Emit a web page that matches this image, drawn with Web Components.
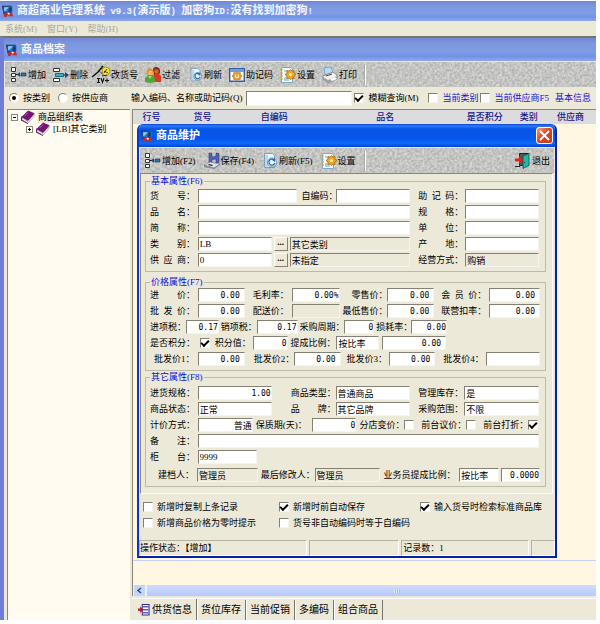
<!DOCTYPE html>
<html lang="zh-CN">
<head>
<meta charset="utf-8">
<title>商超商业管理系统</title>
<style>
html{height:100%}
body{margin:0;min-height:100%;display:flex;flex-direction:column;background:#fff;color:#000;font:9px/12px "Liberation Serif","Noto Sans CJK SC",serif}
</style>
</head>
<body>
<shop-app></shop-app>
<script>
const base = `*{box-sizing:border-box}input,button,select{font:inherit;color:inherit;margin:0;border-radius:0}`;
function define(name, css, html, setup){
  const t = document.createElement('template');
  t.innerHTML = `<style>${base}${css}</style>${html}`;
  customElements.define(name, class extends HTMLElement{
    constructor(){ super(); this.attachShadow({mode:'open'}).append(t.content.cloneNode(true)); }
    connectedCallback(){ if(setup) setup(this, this.shadowRoot); }
  });
}

const icons = {
app:`<path fill="#1b2440" d="M0 1h13v11H2z"/><path fill="#2f78c8" d="M2 2h12v8H2z"/><path fill="#8fd0f4" d="M3 3h6L4 8H3z"/><path fill="#173a74" d="M10 3h3v6H8z"/><path fill="#c02c2c" d="M2 12l3-2h3l2 1 3-1 2 5H9l-1-2-2 3H3z"/><path fill="#fff" d="M7 11l2-1 2 2-2 1z"/>`,
add:`<path fill="#fff" stroke="#333" d="M.5 .5h4v4h-4zM.5 6.500h4v3h-4zM.5 11.500h4v3h-4z"/><path stroke="#111" d="M5 7.500h4"/><path fill="#2b7ba8" stroke="#124" stroke-width=".6" d="M10 6h5v3h-5z"/><path fill="#124a9c" d="M6 7.500l3-2.500v5z"/>`,
del:`<path fill="#fff" stroke="#333" d="M.5 1.500h6v3h-6zM.5 11.500h6v3h-6z"/><path fill="#35b6bd" stroke="#176c80" d="M2.500 6.500h8v3h-8z"/><path stroke="#111" d="M11 8h3"/><path fill="#124a9c" d="M12 5l4 3-4 3z"/>`,
edit:`<path stroke="#111" stroke-width="1.500" d="M-2 10l6-5 5-6"/><path stroke="#444" d="M4 3l7 6M7-1l5 8"/><path fill="#ffe42e" stroke="#776600" stroke-width=".6" d="M8 2l3-2 4 1 1 4-3 4-4-1z"/><path stroke="#111" stroke-width=".8" d="M10 4l4 2m-1-4l-3 4M8 9l5-1"/><path stroke="#111" stroke-width="1.100" d="M3 11.500h3M4.500 11.500v4M3 15.500h3M7 11l1.500 4.500L10 11M11 13.500h4M13 11.500v4"/>`,
users:`<path fill="#7e2d18" d="M8 3q0-3 3-3t4 3v3l-2 2H9z"/><circle cx="11.500" cy="4.500" r="2.300" fill="#c66a34"/><path fill="#dd3722" d="M8 15V9l2-2h4l2 2v6z"/><circle cx="5" cy="5" r="3.500" fill="#e8902a"/><circle cx="5.500" cy="6" r="2.200" fill="#f7bd74"/><path fill="#54a33b" d="M0 15v-4l3-3h5l2 3v4l-5 1z"/><path fill="#a9d676" d="M3 9l2 3 2-3z"/>`,
refresh:`<path fill="#eaf3fb" stroke="#7e9fbd" d="M2.500.5h8l2 2v12h-10z"/><path fill="#b9d7ee" d="M3 2h3v12H3z"/><circle cx="10" cy="9.500" r="4.500" fill="#e8f7ff" stroke="#5d93bd"/><path stroke="#356d9e" stroke-width="1.300" d="M12 7a3 3 0 1 0 .8 3"/><path fill="#356d9e" d="M13 5v4l-3-2z"/>`,
code:`<path fill="#fff" stroke="#365e9c" stroke-width="1.400" d="M.7 1.700h14.600v12.600H.7z"/><path fill="#6b9fe2" d="M1 2h14v3H1z"/><path fill="#f2a022" stroke="#a86510" stroke-width=".6" d="M8 4.500l1.300 1.300 2-.2v2L13 9l-1.700 1.400v2H9L8 13.500 7 12.400H4.700v-2L3 9l1.700-1.400v-2l2 .2z"/><circle cx="8" cy="9" r="2" fill="#fff"/><path stroke="#a05400" d="M8 7v3"/>`,
gear:`<path fill="#f5fafc" stroke="#83a8bc" d="M1.500.5h10l1 2v13h-11z"/><path stroke="#70a5bc" d="M4 4h3M4 11h3M4 13h5"/><path stroke="#c9a742" d="M0 3h3M0 6h3M0 9h3M0 12h3"/><path fill="#f0a426" stroke="#9d5b0c" stroke-width=".7" d="M10.500 2.500L12 4l2-.4V6l2 1.500L14 9v2.500l-2-.3-1.500 1.500L9 11.200l-2 .3V9L5 7.500 7 6V3.600L9 4z"/><circle cx="10.500" cy="7.500" r="1.500" fill="#fff0ba"/>`,
print:`<path fill="#b9daf4" stroke="#6c94b9" stroke-width=".7" d="M3 8L2 1l7-1 2 6z"/><path fill="#f2f2ec" stroke="#666" stroke-width=".7" d="M1 9l10-4 4 3v4l-9 4-5-4z"/><path fill="#9fa3a3" d="M1 10l5 3v3l-5-4zM6 13l9-4v3l-9 4z"/><path fill="#fff" d="M8 12l5-2 2 2-5 2z"/><path stroke="#444" d="M4 9l6-2"/>`,
save:`<path fill="#5262b5" stroke="#2b3682" stroke-width=".6" d="M5 0l3 .5V4l4-.5V0l3 .5v9l-3 .5V6L8 6.500V11l-3-1z"/><path fill="#e0e3e8" stroke="#666" stroke-width=".6" d="M0 12l6-3 10 2-6 4z"/><path fill="#858993" d="M0 12l10 3v1L0 14zM10 15l6-4v1l-6 4z"/><path fill="#223" d="M5 11l4 1-1 1-4-1z"/>`,
exit:`<path fill="#555" stroke="#222" d="M4.500.5h9v12h-9z"/><path fill="#24b5ad" stroke="#075854" stroke-width=".8" d="M8 3l6-2.500v12L8 15.500z"/><path fill="#044" d="M9 9h1v1H9z"/><path stroke="#222" d="M0 13.500h5"/><path fill="#ed1c1c" d="M0 5.500h4V3l4 4-4 4V8.500H0z"/>`,
book:`<path fill="#78107e" stroke="#300635" stroke-width=".7" d="M1 8l7-7 7 3-7 8z"/><path fill="#fff" stroke="#555" stroke-width=".5" d="M1 9l7 4 7-8v2l-7 8-7-4z"/><path fill="#5c0764" d="M0 8l1-1v4l7 4v1l-8-4z"/><path stroke="#c46bca" d="M4 7l4-4"/>`,
supply:`<path fill="#fff" stroke="#312b83" stroke-width="1.400" d="M5.700.7h9v14h-9z"/><path stroke="#6357c7" stroke-width="2" d="M6 3.500h8M6 7.500h8M6 11.500h8"/><path fill="#b81728" d="M0 6h3V3l4 4.500L3 12V9H0z"/>`
};
define('ui-icon', `:host{display:block;flex:none;width:16px;height:16px}svg{display:block;width:100%;height:100%;overflow:visible}:host([size="14"]){width:14px;height:14px}:host([size="12"]){width:12px;height:12px}`,
`<svg viewBox="0 0 16 16" fill="none" aria-hidden="true"></svg>`,
(h,r)=>{ r.querySelector('svg').innerHTML = icons[h.getAttribute('name')]; });

define('title-bar', `:host{display:flex;align-items:center;gap:3px;color:#f4f7ff;font:bold 11px/14px "Liberation Mono","Noto Sans CJK SC",monospace;white-space:nowrap;background:linear-gradient(#7186d3,#7b96df 20%,#809ce4 60%,#7392e4 80%,#8aa9ee)}::slotted(small){font-size:9px}`,
`<ui-icon name="app" size="12"></ui-icon><span><slot></slot></span><slot name="end"></slot>`);

define('tool-bar', `:host{display:block;position:relative;height:26px;overflow:hidden;background:#c8c8c6;border-top:1px solid #e8e8e4}
svg{position:absolute;inset:0;width:100%;height:100%}nav{position:relative;height:100%;display:flex;align-items:center}`,
`<svg aria-hidden="true"><filter id="grain" x="0" y="0" width="100%" height="100%" color-interpolation-filters="sRGB"><feTurbulence type="fractalNoise" baseFrequency=".4" numOctaves="2" seed="4"/><feColorMatrix values=".3 0 0 0 .62 .3 0 0 0 .62 .3 0 0 0 .61 0 0 0 0 1"/></filter><rect width="100%" height="100%" filter="url(#grain)"/></svg><nav><slot></slot></nav>`);
define('tool-button', `:host{display:block;flex:none}button{display:flex;align-items:center;gap:1px;padding:0;border:0;background:none;white-space:nowrap}`,
`<button type="button"><ui-icon></ui-icon><slot></slot></button>`,
(h,r)=>{const i=r.querySelector('ui-icon'),n=document.createElement('ui-icon');n.setAttribute('name',h.getAttribute('icon'));n.setAttribute('size',h.getAttribute('size')||'16');i.replaceWith(n);});
define('tool-rule', `:host{display:block;flex:none;width:2px;height:20px;border-left:1px solid #aaa;border-right:1px solid #fff}`, ``);

define('check-box', `:host{display:block;flex:none}label{display:flex;align-items:center;gap:4px;white-space:nowrap}
input{appearance:none;flex:none;width:10px;height:10px;background:#fff;border:1px solid;border-color:#858172 #f5f4ee #f5f4ee #858172;display:grid;place-items:center}
input[type=radio]{border-radius:50%}
input[type=checkbox]:checked::before{content:"";width:6px;height:3px;border:solid #000;border-width:0 0 2px 2px;rotate:-45deg;margin-bottom:2px}
input[type=radio]:checked::before{content:"";width:4px;height:4px;border-radius:50%;background:#000}`,
`<label><input type="checkbox"><span><slot></slot></span></label>`,
(h,r)=>{const i=r.querySelector('input');if(h.hasAttribute('radio'))i.type='radio';i.checked=h.hasAttribute('checked');});

/* cap and box are proportional widths of the caption and the entry; lead is the space before the pair. */
define('form-field', `:host{display:grid;min-width:0;align-items:center}
label{white-space:nowrap;min-width:0}
input[type=text]{width:100%;min-width:0;height:14px;padding:0 1px;line-height:12px;background:#fff;border:1px solid;border-color:#858172 #f5f4ee #f5f4ee #858172;outline:none}
:host([num]) input[type=text]{font:8px/12px "DejaVu Sans Mono","Noto Sans CJK SC",monospace;text-align:right;padding-right:4px}
:host([right]) input[type=text]{text-align:right}
:host([tight]) input[type=text]{padding-right:0}
input[readonly]{background:#ece9d8!important}`,
`<label for="f"></label><input id="f" type="text">`,
(h,r)=>{
  const g=k=>h.getAttribute(k)||'', l=r.querySelector('label'), i=r.querySelector('input');
  const cap=+g('cap'), box=+g('box');
  h.style.flex=`${cap+box} 1 0`; h.style.marginLeft=(g('lead')||0)+'px';
  l.textContent=g('label');
  if(cap) h.style.gridTemplateColumns=`minmax(0,${cap}fr) minmax(0,${box}fr)`;
  else { h.style.gridTemplateColumns='minmax(0,1fr)'; l.remove(); i.setAttribute('aria-label',g('name')); }
  i.value=g('value'); i.readOnly=h.hasAttribute('ro');
});
define('form-check', `:host{display:flex;align-items:center;min-width:0}label{white-space:nowrap;min-width:0}
input{appearance:none;flex:none;width:10px;height:10px;margin:0;background:#fff;border:1px solid;border-color:#858172 #f5f4ee #f5f4ee #858172;display:grid;place-items:center}
input:checked::before{content:"";width:6px;height:3px;border:solid #000;border-width:0 0 2px 2px;rotate:-45deg;margin-bottom:2px}`,
`<label for="c"></label><input id="c" type="checkbox">`,
(h,r)=>{const l=r.querySelector('label'),cap=+h.getAttribute('cap');h.style.flex=`${cap+10} 1 0`;h.style.marginLeft=(h.getAttribute('lead')||0)+'px';l.style.flex='1 1 0';l.textContent=h.getAttribute('label');r.querySelector('input').checked=h.hasAttribute('checked');});
define('pick-button', `:host{display:block;flex:none;margin:0 2px}button{display:grid;place-items:center;width:14px;height:14px;padding:0 0 4px;line-height:8px;font-weight:bold;background:#ece9d8;border:1px solid;border-color:#fff #858172 #858172 #fff}`,
`<button type="button" aria-label="选择">...</button>`);
define('form-row', `:host{display:flex;align-items:center;height:14px}`, `<slot></slot>`,
(h)=>{h.style.paddingRight=(h.getAttribute('end')||0)+'px';});
define('form-group', `:host{display:block}fieldset{min-width:0;margin:0;padding:0 5px 4px 4px;border:1px solid #bdbaa8}
legend{line-height:12px;padding:0 1px;color:#0a10e0}div{display:flex;flex-direction:column;gap:2px}`,
`<fieldset><legend></legend><div><slot></slot></div></fieldset>`,
(h,r)=>{r.querySelector('legend').textContent=h.getAttribute('legend');});

define('goods-dialog', `:host{display:flex;flex-direction:column;background:#ece9d8;border:2px solid #0a35d0;border-top:0;border-right-color:#0720a8;border-bottom-color:#0720a8;border-radius:6px 6px 0 0;overflow:hidden}
title-bar{height:23px;padding:0 2px;background:linear-gradient(#0a3fd0,#2b7bf5 8%,#0655e6 22%,#0556ea 60%,#0a68fb 85%,#0443cd);color:#fff}
.close{margin-left:auto;width:17px;height:17px;padding:2px;border:1px solid #fff;border-radius:3px;background:linear-gradient(135deg,#f0a088,#dc4a24 45%,#c23a14)}
.close svg{display:block;width:11px;height:11px}
tool-bar{margin:0 1px;padding-left:5px}
.sp{margin-left:8px}.out{margin-left:auto;margin-right:4px}
main{margin:0 2px 0 1px;padding:1px 6px 6px 4px;border:1px solid;border-color:#8a8778 #fff #fff #8a8778}
.g2{margin-top:4px}
.pad2{margin-top:2px}.pad3{margin-top:3px}
.opts{display:grid;grid-template-columns:136fr 141fr 133fr;gap:2px 0;padding:6px 2px 10px 4px}
.opts check-box{height:14px;display:flex;align-items:center}
footer{display:flex;gap:2px;height:16px;line-height:14px}
footer span{border:1px solid;border-color:#b5b2a0 #fff #fff #b5b2a0;min-width:0;white-space:nowrap}`,
`<title-bar>商品维护<button slot="end" class="close" type="button" aria-label="关闭"><svg viewBox="0 0 11 11"><path d="M1 1l9 9M10 1l-9 9" stroke="#fff" stroke-width="1.800"/></svg></button></title-bar>
<tool-bar><tool-button icon="add">增加(F2)</tool-button><tool-button icon="save" class="sp">保存(F4)</tool-button><tool-button icon="refresh" class="sp">刷新(F5)</tool-button><tool-button icon="gear" class="sp">设置</tool-button><tool-rule class="sp"></tool-rule><tool-button icon="exit" class="out">退出</tool-button></tool-bar>
<main>
<form-group legend="基本属性(F6)">
<form-row class="pad2" end="1"><form-field label="货　　号：" cap="48" box="99"></form-field><form-field lead="5" label="自编码：" cap="34" box="75"></form-field><form-field lead="8" label="助&ensp;记&ensp;码：" cap="47" box="74"></form-field></form-row>
<form-row end="1"><form-field label="品　　名：" cap="48" box="213"></form-field><form-field lead="8" label="规　　格：" cap="47" box="74"></form-field></form-row>
<form-row end="1"><form-field label="简　　称：" cap="48" box="213"></form-field><form-field lead="8" label="单　　位：" cap="47" box="74"></form-field></form-row>
<form-row end="1"><form-field label="类　　别：" cap="48" box="74" value="LB"></form-field><pick-button></pick-button><form-field name="类别名称" cap="0" box="121" value="其它类别" ro></form-field><form-field lead="8" label="产　　地：" cap="47" box="74"></form-field></form-row>
<form-row end="1"><form-field label="供&ensp;应&ensp;商：" cap="48" box="74" value="0"></form-field><pick-button></pick-button><form-field name="供应商名称" cap="0" box="121" value="未指定" ro></form-field><form-field lead="8" label="经营方式：" cap="47" box="74" value="购销" ro></form-field></form-row>
</form-group>
<form-group class="g2" legend="价格属性(F7)">
<form-row><form-field num label="进　　价：" cap="48" box="47" value="0.00"></form-field><form-field num tight lead="8" label="毛利率：" cap="39" box="48" value="0.00%"></form-field><form-field num lead="12" label="零售价：" cap="36" box="47" value="0.00"></form-field><form-field num lead="7" label="会&ensp;员&ensp;价：" cap="48" box="51" value="0.00"></form-field></form-row>
<form-row><form-field num label="批&ensp;发&ensp;价：" cap="48" box="47" value="0.00"></form-field><form-field num lead="8" label="配送价：" cap="39" box="48" ro></form-field><form-field num lead="3" label="最低售价：" cap="45" box="47" value="0.00"></form-field><form-field num lead="7" label="联营扣率：" cap="48" box="51" value="0.00"></form-field></form-row>
<form-row end="93"><form-field num tight label="进项税：" cap="36" box="33" value="0.17"></form-field><form-field num tight lead="2" label="销项税：" cap="36" box="41" value="0.17"></form-field><form-field num tight lead="2" label="采购周期：" cap="45" box="30" value="0"></form-field><form-field num tight lead="2" label="损耗率：" cap="35" box="36" value="0.00"></form-field></form-row>
<form-row end="94"><form-check label="是否积分：" cap="50" checked></form-check><form-field num tight lead="5" label="积分值：" cap="38" box="35" value="0"></form-field><form-field lead="3" label="提成比例：" cap="46" box="43" value="按比率"></form-field><form-field num lead="3" name="提成值" cap="0" box="64" value="0.00"></form-field></form-row>
<form-row><form-field num lead="4" label="批发价1：" cap="44" box="47" value="0.00"></form-field><form-field num lead="9" label="批发价2：" cap="40" box="47" value="0.00"></form-field><form-field num lead="6" label="批发价3：" cap="43" box="46" value="0.00"></form-field><form-field num lead="8" label="批发价4：" cap="43" box="54"></form-field></form-row>
</form-group>
<form-group legend="其它属性(F8)">
<form-row class="pad3" end="1"><form-field num tight label="进货规格：" cap="48" box="74" value="1.00"></form-field><form-field lead="19" label="商品类型：" cap="45" box="75" value="普通商品"></form-field><form-field lead="8" label="管理库存：" cap="46" box="75" value="是"></form-field></form-row>
<form-row end="1"><form-field label="商品状态：" cap="48" box="74" value="正常"></form-field><form-field lead="19" label="品　　牌：" cap="45" box="75" value="其它品牌"></form-field><form-field lead="8" label="采购范围：" cap="46" box="75" value="不限"></form-field></form-row>
<form-row end="2"><form-field right tight label="计价方式：" cap="48" box="55" value="普通"></form-field><form-field num tight lead="3" label="保质期(天)：" cap="56" box="45" value="0"></form-field><form-check lead="3" label="分店变价：" cap="45"></form-check><form-check lead="7" label="前台议价：" cap="45"></form-check><form-check lead="7" label="前台打折：" cap="45" checked></form-check></form-row>
<form-row end="1"><form-field label="备　　注：" cap="48" box="342"></form-field></form-row>
<form-row end="283"><form-field label="柜　　台：" cap="48" box="60" value="9999"></form-field></form-row>
<form-row class="pad2"><form-field lead="8" label="建档人：" cap="39" box="61" value="管理员" ro></form-field><form-field lead="3" label="最后修改人：" cap="54" box="66" value="管理员" ro></form-field><form-field lead="3" label="业务员提成比例：" cap="76" box="40" value="按比率"></form-field><form-field num tight lead="2" name="业务员提成值" cap="0" box="39" value="0.0000"></form-field></form-row>
</form-group>
</main>
<section class="opts"><check-box>新增时复制上条记录</check-box><check-box checked>新增时前自动保存</check-box><check-box checked>输入货号时检索标准商品库</check-box><check-box>新增商品价格为零时提示</check-box><check-box>货号非自动编码时等于自编码</check-box></section>
<footer><span style="flex:170 1 0">操作状态：【增加】</span><span style="flex:90 1 0"></span><span style="flex:128 1 0;padding-left:1px">记录数：1</span><span style="flex:22 1 0"></span></footer>`);

define('tree-panel', `:host{display:block;background:#fffbf0;border:1px solid #8a8778;border-width:1px 0 0 1px;padding-top:1px}
ul{list-style:none;margin:0;padding:0}li>div{display:flex;align-items:center;gap:3px;height:12px;padding-left:3px;white-space:nowrap}li li>div{padding-left:18px}
button{width:7px;height:7px;padding:0;border:1px solid #8a8778;background:#fff;display:grid;place-items:center}svg{display:block;width:5px;height:5px}mark{background:#ece9d8;color:#000}`,
`<ul><li><div><button aria-label="折叠"><svg><path d="M1 2.500h3" stroke="#000"/></svg></button><ui-icon name="book" size="14"></ui-icon><mark>商品组织表</mark></div><ul><li><div><button aria-label="展开"><svg><path d="M1 2.500h3M2.500 1v3" stroke="#000"/></svg></button><ui-icon name="book" size="14"></ui-icon><span>[LB]其它类别</span></div></li></ul></li></ul>`);

define('goods-grid', `:host{display:flex;flex-direction:column;min-width:0;background:#ece9d8}
.body{flex:1;background:linear-gradient(#c5d2f5,#c5d2f5) 0 calc(100% - 24px)/100% 1px no-repeat #fff7e1;border:1px solid #8a8778;border-width:1px 0 0 1px}
table{width:100%;border-collapse:collapse;table-layout:fixed;background:#dcdcde;color:#15158c}th{height:14px;padding:0;font-weight:500;line-height:12px;white-space:nowrap}
.bar{display:flex;gap:2px;height:11px;padding-left:1px;border-left:1px solid #8a8778;background:#eef1fd}
.bar button{width:11px;padding:0;border:0;background:#c4d5fc;display:grid;place-items:center}.bar i{flex:1;background:linear-gradient(#cfdcff,#b5c9fb);display:grid;place-items:center}
.bar i::before{content:"";width:6px;height:4px;margin-left:50px;background:repeating-linear-gradient(90deg,#dde7ff 0 1px,#a8bcf0 1px 2px)}
nav{display:flex;margin-top:2px;height:22px;font-size:10px;border-top:1px solid #fff}
nav button{display:flex;align-items:center;gap:2px;padding:0 4px 0 3px;border:solid #77756a;border-width:0 1px 0 0;background:none;white-space:nowrap;margin:1px 0 0}nav button:first-child{padding-left:6px;margin-top:0}nav button+button{border-left:1px solid #fff}`,
`<div class="body"><table><colgroup><col style="width:8%"><col style="width:14%"><col style="width:17%"><col style="width:31%"><col style="width:12%"><col style="width:7%"><col style="width:11%"></colgroup><thead><tr><th>行号</th><th>货号</th><th>自编码</th><th>品名</th><th>是否积分</th><th>类别</th><th>供应商</th></tr></thead></table></div>
<div class="bar"><button aria-label="向左"><svg width="5" height="7"><path d="M4 1L1 3.500 4 6" stroke="#33527f" stroke-width="1.600" fill="none"/></svg></button><i></i></div>
<nav><button><ui-icon name="supply" size="12"></ui-icon>供货信息</button><button>货位库存</button><button>当前促销</button><button>多编码</button><button>组合商品</button></nav>`);

define('shop-app', `:host{flex:1;position:relative;display:flex;flex-direction:column;margin:1px 4px 4px 0;background:#ece9d8}
.t1{height:20px;padding-left:2px}
menu{display:flex;gap:10px;height:15px;margin:0;padding:1px 5px;color:#aaa899}menu button{border:0;padding:0;background:none;font-size:9px}
.child{flex:1;display:flex;flex-direction:column;border:solid #6f7dd8;border-width:0 0 0 4px;border-top:2px solid #777568}
.t2{height:23px;padding-left:2px}.child tool-bar{margin-left:1px;padding-left:6px}
.filter{display:flex;align-items:center;height:22px;padding:0 5px;white-space:nowrap}
.filter label{margin:0 3px 0 23px}.filter input{flex:1 1 0;min-width:20px;height:15px;border:1px solid;border-color:#858172 #f5f4ee #f5f4ee #858172;background:#fff}
.blue{color:#1414dc}
.split{flex:1;display:grid;grid-template-columns:123fr 464fr;gap:2px;padding-left:3px}
goods-dialog{position:absolute;left:137px;right:39px;top:123px}`,
`<title-bar class="t1">商超商业管理系统<small> v9.3(</small>演示版<small>) </small>加密狗<small>ID:</small>没有找到加密狗<small>!</small></title-bar>
<menu><button>系统(M)</button><button>窗口(Y)</button><button>帮助(H)</button></menu>
<div class="child"><title-bar class="t2">商品档案</title-bar>
<tool-bar><tool-button icon="add">增加</tool-button><tool-button icon="del" style="margin-left:7px">删除</tool-button><tool-button icon="edit" style="margin-left:6px">改货号</tool-button><tool-button icon="users" style="margin-left:7px">过滤</tool-button><tool-button icon="refresh" size="14" style="margin-left:9px">刷新</tool-button><tool-button icon="code" style="margin-left:7px">助记码</tool-button><tool-button icon="gear" style="margin-left:7px">设置</tool-button><tool-button icon="print" style="margin-left:7px">打印</tool-button><tool-rule style="margin-left:7px"></tool-rule></tool-bar>
<div class="filter"><check-box radio checked>按类别</check-box><check-box radio style="margin-left:8px">按供应商</check-box><label for="q">输入编码、名称或助记码(Q)</label><input id="q" type="text"><check-box checked style="margin-left:2px">模糊查询(M)</check-box><check-box class="blue" style="margin-left:10px">当前类别</check-box><check-box class="blue" style="margin-left:2px">当前供应商F5</check-box><span class="blue" style="margin-left:6px">基本信息</span></div>
<div class="split"><tree-panel></tree-panel><goods-grid></goods-grid></div></div>
<goods-dialog></goods-dialog>`);
</script>
</body>
</html>
